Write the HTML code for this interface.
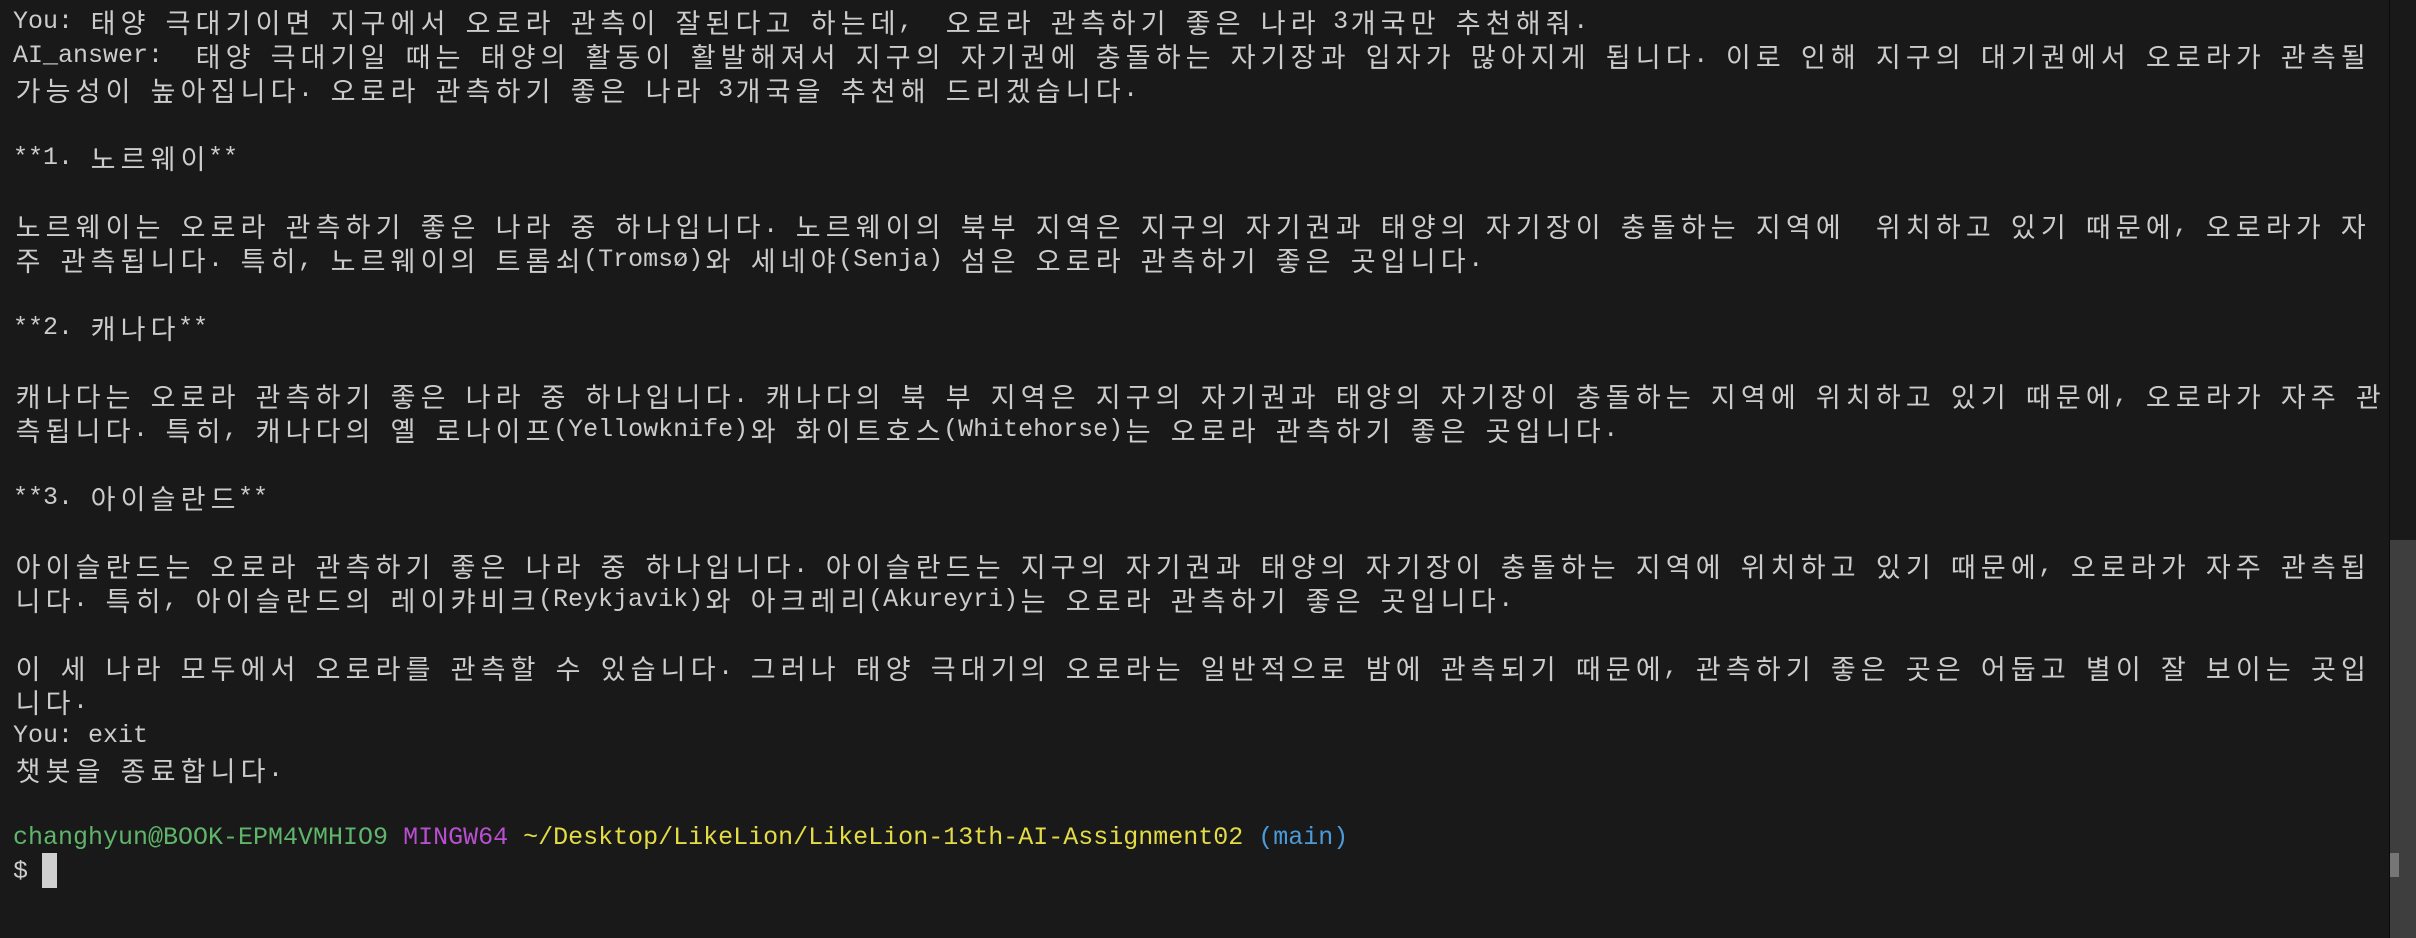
<!DOCTYPE html>
<html><head><meta charset="utf-8">
<style>
html,body{margin:0;padding:0;}
body{width:2416px;height:938px;background:#191919;overflow:hidden;position:relative;}
#t{position:absolute;left:13px;top:5px;font-family:"Liberation Mono",monospace;font-size:25px;color:#cccccc;}
#t div{height:34px;line-height:34px;white-space:pre;overflow:visible;}
.h{display:inline-block;width:30px;text-align:center;font-family:"Noto Sans CJK KR","NanumGothic",sans-serif;font-size:27px;line-height:34px;height:34px;vertical-align:top;}
.g{color:#5fb56a}.m{color:#b84fd0}.y{color:#e3dc45}.b{color:#4c9ad8}
#div{position:absolute;left:2389px;top:0;width:1px;height:938px;background:#0a0a0a;}
#track{position:absolute;left:2390px;top:540px;width:26px;height:398px;background:#3e3e3e;}
#thumb{position:absolute;left:2390px;top:853px;width:9px;height:24px;background:#767676;}
#cur{position:absolute;left:42px;top:853px;width:15px;height:35px;background:#d0d0d0;}
</style></head><body>
<div id="t">
<div>You: 태양 극대기이면 지구에서 오로라 관측이 잘된다고 하는데,  오로라 관측하기 좋은 나라 3개국만 추천해줘.</div>
<div>AI_answer:  태양 극대기일 때는 태양의 활동이 활발해져서 지구의 자기권에 충돌하는 자기장과 입자가 많아지게 됩니다. 이로 인해 지구의 대기권에서 오로라가 관측될</div>
<div>가능성이 높아집니다. 오로라 관측하기 좋은 나라 3개국을 추천해 드리겠습니다.</div>
<div></div>
<div>**1. 노르웨이**</div>
<div></div>
<div>노르웨이는 오로라 관측하기 좋은 나라 중 하나입니다. 노르웨이의 북부 지역은 지구의 자기권과 태양의 자기장이 충돌하는 지역에  위치하고 있기 때문에, 오로라가 자</div>
<div>주 관측됩니다. 특히, 노르웨이의 트롬쇠(Tromsø)와 세네야(Senja) 섬은 오로라 관측하기 좋은 곳입니다.</div>
<div></div>
<div>**2. 캐나다**</div>
<div></div>
<div>캐나다는 오로라 관측하기 좋은 나라 중 하나입니다. 캐나다의 북 부 지역은 지구의 자기권과 태양의 자기장이 충돌하는 지역에 위치하고 있기 때문에, 오로라가 자주 관</div>
<div>측됩니다. 특히, 캐나다의 옐 로나이프(Yellowknife)와 화이트호스(Whitehorse)는 오로라 관측하기 좋은 곳입니다.</div>
<div></div>
<div>**3. 아이슬란드**</div>
<div></div>
<div>아이슬란드는 오로라 관측하기 좋은 나라 중 하나입니다. 아이슬란드는 지구의 자기권과 태양의 자기장이 충돌하는 지역에 위치하고 있기 때문에, 오로라가 자주 관측됩</div>
<div>니다. 특히, 아이슬란드의 레이캬비크(Reykjavik)와 아크레리(Akureyri)는 오로라 관측하기 좋은 곳입니다.</div>
<div></div>
<div>이 세 나라 모두에서 오로라를 관측할 수 있습니다. 그러나 태양 극대기의 오로라는 일반적으로 밤에 관측되기 때문에, 관측하기 좋은 곳은 어둡고 별이 잘 보이는 곳입</div>
<div>니다.</div>
<div>You: exit</div>
<div>챗봇을 종료합니다.</div>
<div></div>
<div><span class="g">changhyun@BOOK-EPM4VMHIO9</span> <span class="m">MINGW64</span> <span class="y">~/Desktop/LikeLion/LikeLion-13th-AI-Assignment02</span> <span class="b">(main)</span></div>
<div>$</div>
</div>
<div id="cur"></div>
<div id="div"></div>
<div id="track"></div>
<div id="thumb"></div>
<script>
(function(){
var root=document.getElementById('t');
var w=document.createTreeWalker(root,NodeFilter.SHOW_TEXT,null);
var nodes=[];while(w.nextNode())nodes.push(w.currentNode);
var re=/[\u1100-\u11ff\u3130-\u318f\uac00-\ud7af]/;
nodes.forEach(function(n){
 var s=n.nodeValue;if(!re.test(s))return;
 var f=document.createDocumentFragment(),buf='';
 for(var i=0;i<s.length;i++){
  var c=s[i];
  if(re.test(c)){
   if(buf){f.appendChild(document.createTextNode(buf));buf='';}
   var sp=document.createElement('span');sp.className='h';sp.textContent=c;f.appendChild(sp);
  } else buf+=c;
 }
 if(buf)f.appendChild(document.createTextNode(buf));
 n.parentNode.replaceChild(f,n);
});
})();
</script>
</body></html>
